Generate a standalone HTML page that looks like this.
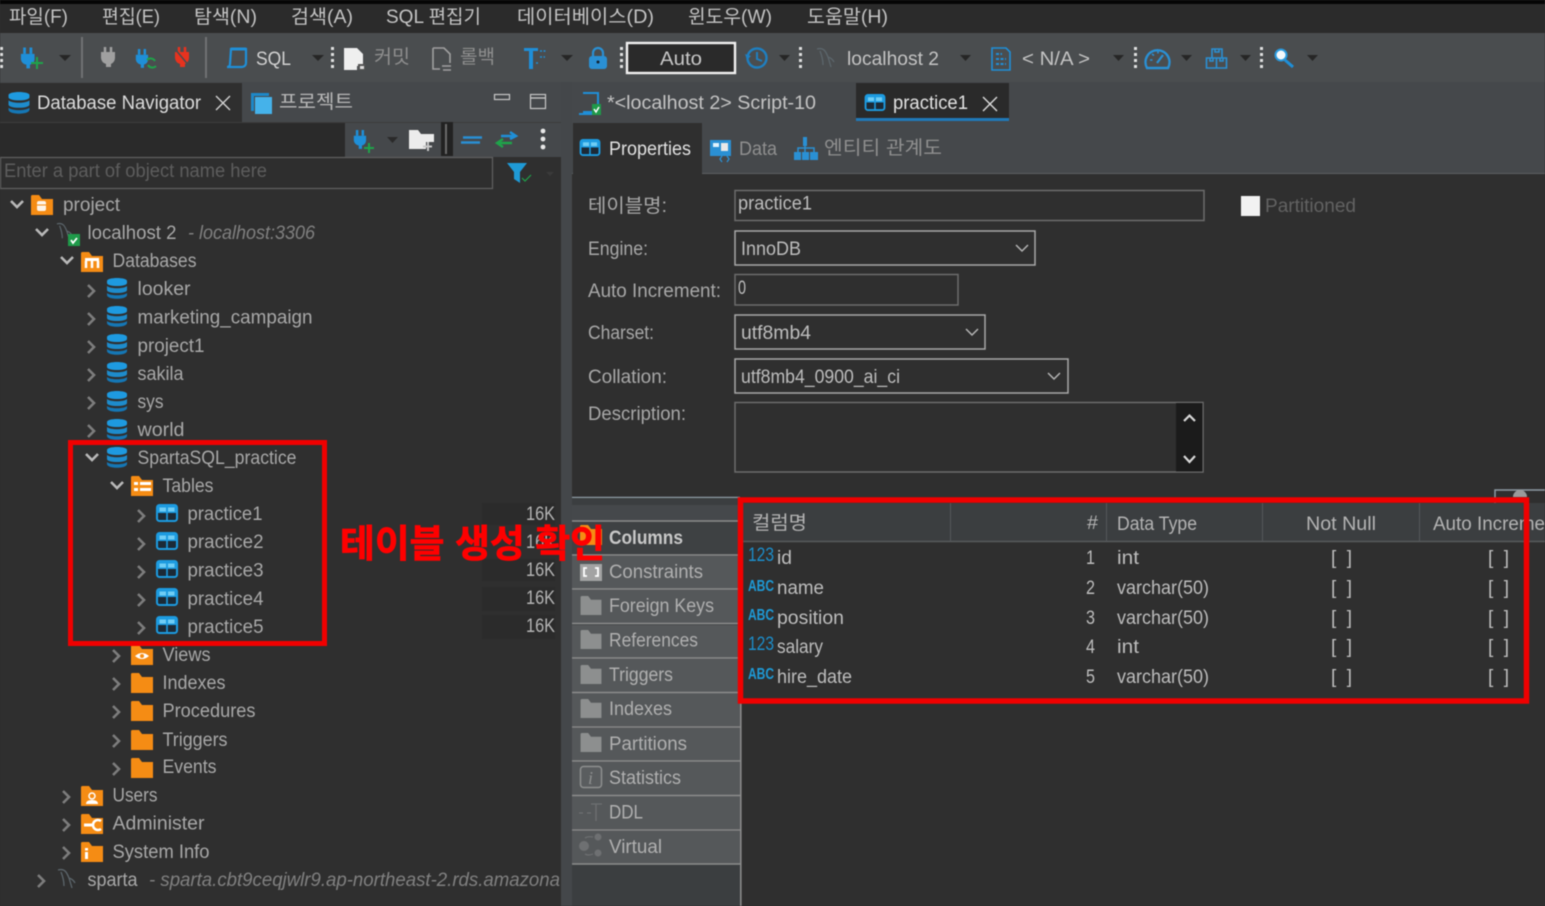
<!DOCTYPE html>
<html lang="ko"><head><meta charset="utf-8"><title>DBeaver</title>
<style>
html,body{margin:0;padding:0;background:#2f2f2f;width:1545px;height:906px;overflow:hidden}
svg{display:block;filter:blur(.4px)}
text{font-family:"Liberation Sans","Noto Sans CJK KR",sans-serif;font-size:19px;fill:#a9a9a9;white-space:pre}
.m text{fill:#c4c4c4}
.t text{fill:#d2d2d2}
.i{font-style:italic;fill:#808080}
.g text{fill:#a8a8a8}
.s text{fill:#b4b4b4}
.b text{fill:#bdbdbd}
.dd{fill:#262626}
.gr{fill:#e0e0e0}
</style></head><body>
<svg xmlns="http://www.w3.org/2000/svg" width="1545" height="906" viewBox="0 0 1545 906">
<defs>
<symbol id="plug" viewBox="0 0 22 24" overflow="visible"><path d="M5 1v7M12 1v7" stroke="#1f8fd8" stroke-width="3" fill="none"/><path d="M1 8h15v6a7 7 0 0 1-5 6v4H7v-4a7 7 0 0 1-6-6z" fill="#1f8fd8"/></symbol>
<symbol id="db" viewBox="0 0 20 21"><path d="M0 3c0-4 20-4 20 0v2c0 4-20 4-20 0z" fill="#1e9ae0"/><path d="M0 8c3 3 17 3 20 0v4c0 4-20 4-20 0z" fill="#1e8ccc"/><path d="M0 15c3 3 17 3 20 0v2c0 5-20 5-20 0z" fill="#1577b5"/></symbol>
<symbol id="tb" viewBox="0 0 22 18"><rect x="1" y="1" width="20" height="16" rx="2.500" fill="#1c2a36" stroke="#1d9be0" stroke-width="2"/><rect x="1" y="1" width="20" height="8" rx="2" fill="#1d9be0"/><rect x="3.500" y="3.500" width="6.500" height="4" fill="#6fcdf5"/><rect x="12" y="3.500" width="6.500" height="4" fill="#6fcdf5"/><path d="M11 9v8" stroke="#1d9be0" stroke-width="1.600"/></symbol>
<symbol id="fo" viewBox="0 0 22 20"><path d="M0 1.500Q0 0 1.500 0H8l3 4h11v16H0z" fill="#f58c14"/></symbol>
<symbol id="fg" viewBox="0 0 22 20"><path d="M0 1.500Q0 0 1.500 0H8l3 4h11v16H0z" fill="#8d8f8f"/></symbol>
<symbol id="cr" viewBox="0 0 12 16"><path d="M2 2l6 6-6 6" fill="none" stroke="#7d7d7d" stroke-width="2.600"/></symbol>
<symbol id="cd" viewBox="0 0 16 12"><path d="M2 2l6 6 6-6" fill="none" stroke="#b9b9b9" stroke-width="2.600"/></symbol>
<symbol id="conn" viewBox="0 0 20 22"><path d="M1 2c7-2 9 3 11 8l3 10M4 4c2 5 3 10 3 14M12 10c3 1 5 3 6 5" fill="none" stroke="#5c666c" stroke-width="1.300"/></symbol>
<symbol id="gp" viewBox="0 0 4 22"><rect y="0" width="3" height="3" class="gr"/><rect y="6" width="3" height="3" class="gr"/><rect y="12" width="3" height="3" class="gr"/><rect y="18" width="3" height="3" class="gr"/></symbol>
</defs>

<rect width="1545" height="906" fill="#2f2f2f"/>
<!-- menu -->
<rect width="1545" height="33" fill="#2b2b2b"/><rect width="1545" height="4" fill="#050505"/>
<g class="m">
<text x="9" y="23" textLength="59" lengthAdjust="spacingAndGlyphs">파일(F)</text>
<text x="102" y="23" textLength="58" lengthAdjust="spacingAndGlyphs">편집(E)</text>
<text x="194" y="23" textLength="63" lengthAdjust="spacingAndGlyphs">탐색(N)</text>
<text x="291" y="23" textLength="62" lengthAdjust="spacingAndGlyphs">검색(A)</text>
<text x="386" y="23" textLength="95" lengthAdjust="spacingAndGlyphs">SQL 편집기</text>
<text x="517" y="23" textLength="137" lengthAdjust="spacingAndGlyphs">데이터베이스(D)</text>
<text x="688" y="23" textLength="84" lengthAdjust="spacingAndGlyphs">윈도우(W)</text>
<text x="807" y="23" textLength="81" lengthAdjust="spacingAndGlyphs">도움말(H)</text>
</g>
<!-- toolbar -->
<rect y="33" width="1545" height="49" fill="#4a4d4f"/>
<rect x="81" y="37" width="2" height="41" fill="#6f7173"/><rect x="205" y="37" width="2" height="41" fill="#6f7173"/>
<use href="#gp" x="0" y="47" width="4" height="22"/>
<use href="#plug" x="20" y="46" width="20" height="23"/><path d="M37 57v12M31 63h12" stroke="#1fa34a" stroke-width="2"/>
<path class="dd" d="M59 55h12l-6 6z"/>
<g transform="translate(100,47)"><path d="M5 0v6M11 0v6" stroke="#a0a0a0" stroke-width="2.500"/><path d="M1 5h14v6a7 7 0 0 1-4 6v3H6v-3a7 7 0 0 1-5-6z" fill="#a0a0a0"/></g>
<use href="#plug" x="135" y="47" width="18" height="22"/><path d="M147 60a5 5 0 0 1 8 1M156 66a5 5 0 0 1-8-1" stroke="#1fa34a" stroke-width="2" fill="none"/>
<g transform="translate(174,47)"><path d="M5 0v6M11 0v6" stroke="#e8321e" stroke-width="2.500"/><path d="M1 5h14v6a7 7 0 0 1-4 6v3H6v-3a7 7 0 0 1-5-6z" fill="#e8321e"/><path d="M1 2l15 18" stroke="#4a4d4f" stroke-width="1.500"/></g>
<path d="M231 49h15v14a4 4 0 0 1-4 4h-15a3 3 0 0 0 3-3z" fill="none" stroke="#1f8fd8" stroke-width="2.200"/><path d="M231 49h15" stroke="#1f8fd8" stroke-width="3"/>
<text x="256" y="65" textLength="35" lengthAdjust="spacingAndGlyphs" style="fill:#d2d2d2">SQL</text>
<path class="dd" d="M312 55h12l-6 6z"/>
<use href="#gp" x="331" y="47" width="4" height="22"/>
<path d="M344 48h13l6 6v12h-6v4h-13z" fill="#efefef"/><rect x="358" y="64" width="7" height="6" fill="#555"/><rect x="360" y="66" width="4" height="3" fill="#ddd"/>
<text x="374" y="63" textLength="36" lengthAdjust="spacingAndGlyphs" style="fill:#8e8e8e">커밋</text>
<path d="M433 48h11l6 6v9M440 69h-7v-21" fill="none" stroke="#a0a0a0" stroke-width="1.600"/><path d="M442 66h9M451 70h-8" stroke="#a0a0a0" stroke-width="1.500"/>
<text x="460" y="63" textLength="35" lengthAdjust="spacingAndGlyphs" style="fill:#8e8e8e">롤백</text>
<path d="M524 48h14v3h-5v18h-4V51h-5z" fill="#1f8fd8"/><path d="M540 51h7M540 57h5M536 63h3" stroke="#1f8fd8" stroke-width="1.500" stroke-dasharray="2 1.500"/>
<path class="dd" d="M561 55h12l-6 6z"/>
<rect x="589" y="56" width="18" height="13" rx="3" fill="#2a90d4"/><path d="M593 56v-3a5 5 0 0 1 10 0v3" fill="none" stroke="#2a90d4" stroke-width="2.200"/><circle cx="598" cy="62" r="1.500" fill="#123"/>
<use href="#gp" x="620" y="47" width="4" height="22"/>
<rect x="627" y="43" width="108" height="30" fill="#2a2a2a" stroke="#f1f1f1" stroke-width="2.400"/>
<text x="660" y="65" textLength="42" lengthAdjust="spacingAndGlyphs" style="fill:#c8c8c8">Auto</text>
<circle cx="757" cy="58" r="9.500" fill="none" stroke="#1f7fc0" stroke-width="2.400"/><path d="M757 52v7l5 2" fill="none" stroke="#1f7fc0" stroke-width="2"/><path d="M745 54l2 6 4-4z" fill="#1f7fc0"/>
<path class="dd" d="M779 55h11l-5.500 6z"/>
<use href="#gp" x="799" y="47" width="4" height="22"/>
<use href="#conn" x="816" y="47" width="20" height="22"/>
<text x="847" y="65" textLength="92" lengthAdjust="spacingAndGlyphs" style="fill:#c4c4c4">localhost 2</text>
<path class="dd" d="M960 55h11l-5.500 6z"/>
<path d="M992 48h14l4 4v18h-18z" fill="none" stroke="#1f8fd8" stroke-width="1.600"/><path d="M996 54h6M996 59h10M996 64h10" stroke="#1f8fd8" stroke-width="2" stroke-dasharray="3 1.500"/>
<text x="1022" y="65" textLength="68" lengthAdjust="spacingAndGlyphs" style="fill:#c4c4c4">&lt; N/A &gt;</text>
<path class="dd" d="M1113 55h11l-5.500 6z"/>
<use href="#gp" x="1134" y="47" width="4" height="22"/>
<path d="M1147 68a12 12 0 1 1 21 0z" fill="none" stroke="#2a90d4" stroke-width="2.400"/><path d="M1157 63l6-8" stroke="#2a90d4" stroke-width="2.200"/><path d="M1150 60h2.500M1152 54l2 1.500M1158 51v2.500" stroke="#2a90d4" stroke-width="1.600"/>
<path class="dd" d="M1181 55h11l-5.500 6z"/>
<path d="M1212 49h10v9h-10zM1206.500 58h20v10h-20zM1216.500 58v10M1215 49v3h4v-3M1210 58v3h3v-3M1220 58v3h3v-3" fill="none" stroke="#2a90d4" stroke-width="1.600"/>
<path class="dd" d="M1240 55h11l-5.500 6z"/>
<use href="#gp" x="1260" y="47" width="4" height="22"/>
<circle cx="1281" cy="55" r="5.500" fill="#f3f8fb" stroke="#2a9ade" stroke-width="2"/><path d="M1285 60l8 7" stroke="#1f8fd8" stroke-width="3"/>
<path class="dd" d="M1307 55h11l-5.500 6z"/>

<!-- left panel tabs -->
<rect y="82" width="561" height="40" fill="#45484b"/>
<rect y="83" width="242" height="39" fill="#2f2f2f"/>
<use href="#db" x="8" y="92" width="22" height="22"/>
<text x="37" y="109" textLength="164" lengthAdjust="spacingAndGlyphs" style="fill:#dcdcdc">Database Navigator</text>
<path d="M216 96l14 14M230 96l-14 14" stroke="#d2d2d2" stroke-width="1.400"/>
<path d="M251 93h18v3h-15v15h-3z" fill="#1d88c8"/><rect x="255" y="97" width="17" height="17" fill="#45b2ea"/>
<text x="279" y="108" textLength="74" lengthAdjust="spacingAndGlyphs" style="fill:#b8b8b8">프로젝트</text>
<rect x="494.500" y="94.500" width="15" height="5" fill="none" stroke="#c8c8c8" stroke-width="1.200"/>
<rect x="530.500" y="94.500" width="15" height="14" fill="none" stroke="#c8c8c8" stroke-width="1.200"/><path d="M530 98h16" stroke="#c8c8c8" stroke-width="1.400"/>
<!-- nav toolbar -->
<rect y="122" width="345" height="35" fill="#2a2a2a"/><rect x="345" y="122" width="216" height="35" fill="#45484b"/>
<path d="M0 122.500h561" stroke="#3c3c3c"/>
<use href="#plug" x="353" y="128" width="18" height="22"/><path d="M369 144v10M364 149h10" stroke="#1fa34a" stroke-width="2" transform="translate(0,-1)"/>
<path d="M387 137h11l-5.500 6z" fill="#2a2a2a"/>
<path d="M409 130h9l3 4h13v8h-8v7h-17z" fill="#ececec"/><path d="M428 145v9M423 149.500h9" stroke="#c8c8c8" stroke-width="2" transform="translate(0,-3)"/>
<rect x="441" y="122" width="12" height="34" fill="#222"/><rect x="445" y="124" width="2" height="30" fill="#6a6a6a"/>
<path d="M463 137.500h19M461 142.500h19" stroke="#2a8fd4" stroke-width="2.600" fill="none"/>
<path d="M501 136h14M510 132l6 4-6 3" stroke="#1f8fd8" stroke-width="2.400" fill="none"/><path d="M512 143h-14M503 139l-6 4 6 4" stroke="#1fa34a" stroke-width="2.400" fill="none"/>
<circle cx="543" cy="131" r="2.400" fill="#e8e8e8"/><circle cx="543" cy="139" r="2.400" fill="#e8e8e8"/><circle cx="543" cy="147" r="2.400" fill="#e8e8e8"/>
<!-- filter -->
<rect x=".5" y="157.500" width="492" height="31" fill="#2e2e2e" stroke="#5e5e5e" stroke-width="1.300"/>
<text x="4" y="177" textLength="263" lengthAdjust="spacingAndGlyphs" style="fill:#5d5d5d">Enter a part of object name here</text>
<path d="M507 163h20l-7 9v11l-6-4v-7z" fill="#1f9ad6"/><path d="M522 178l3 3 6-6" stroke="#1fa34a" fill="none" stroke-width="1.200"/>
<path d="M546 172h8l-4 4z" fill="#3a3a3a"/>

<!-- sash -->
<rect x="561" y="82" width="11" height="824" fill="#44474a"/>

<!-- tree -->
<g class="g">
<text x="63" y="211" textLength="57" lengthAdjust="spacingAndGlyphs">project</text>
<text x="87.500" y="239" textLength="89" lengthAdjust="spacingAndGlyphs">localhost 2</text>
<text x="188" y="239" textLength="127" lengthAdjust="spacingAndGlyphs" class="i" style="fill:#808080">- localhost:3306</text>
<text x="112.500" y="267" textLength="84" lengthAdjust="spacingAndGlyphs">Databases</text>
<text x="137.500" y="295" textLength="53" lengthAdjust="spacingAndGlyphs">looker</text>
<text x="137.500" y="323.500" textLength="175" lengthAdjust="spacingAndGlyphs">marketing_campaign</text>
<text x="137.500" y="352" textLength="67" lengthAdjust="spacingAndGlyphs">project1</text>
<text x="137.500" y="380" textLength="46" lengthAdjust="spacingAndGlyphs">sakila</text>
<text x="137.500" y="408" textLength="26" lengthAdjust="spacingAndGlyphs">sys</text>
<text x="137.500" y="436" textLength="47" lengthAdjust="spacingAndGlyphs">world</text>
<text x="137.500" y="464" textLength="159" lengthAdjust="spacingAndGlyphs">SpartaSQL_practice</text>
<text x="162.500" y="492" textLength="51" lengthAdjust="spacingAndGlyphs">Tables</text>
<text x="187.500" y="520" textLength="75" lengthAdjust="spacingAndGlyphs">practice1</text>
<text x="187.500" y="548" textLength="76" lengthAdjust="spacingAndGlyphs">practice2</text>
<text x="187.500" y="576.500" textLength="76" lengthAdjust="spacingAndGlyphs">practice3</text>
<text x="187.500" y="605" textLength="76" lengthAdjust="spacingAndGlyphs">practice4</text>
<text x="187.500" y="633" textLength="76" lengthAdjust="spacingAndGlyphs">practice5</text>
<text x="162.500" y="661" textLength="48" lengthAdjust="spacingAndGlyphs">Views</text>
<text x="162.500" y="689" textLength="63" lengthAdjust="spacingAndGlyphs">Indexes</text>
<text x="162.500" y="717" textLength="93" lengthAdjust="spacingAndGlyphs">Procedures</text>
<text x="162.500" y="746" textLength="65" lengthAdjust="spacingAndGlyphs">Triggers</text>
<text x="162.500" y="773" textLength="54" lengthAdjust="spacingAndGlyphs">Events</text>
<text x="112.500" y="801.500" textLength="45" lengthAdjust="spacingAndGlyphs">Users</text>
<text x="112.500" y="829.500" textLength="92" lengthAdjust="spacingAndGlyphs">Administer</text>
<text x="112.500" y="858" textLength="97" lengthAdjust="spacingAndGlyphs">System Info</text>
<text x="87.500" y="886" textLength="50" lengthAdjust="spacingAndGlyphs">sparta</text>
<text x="149" y="886" textLength="411" lengthAdjust="spacingAndGlyphs" class="i" style="fill:#808080">- sparta.cbt9ceqjwlr9.ap-northeast-2.rds.amazona</text>
</g>
<!-- chevrons expanded -->
<use href="#cd" x="9" y="199" width="16" height="12"/>
<use href="#cd" x="34" y="227" width="16" height="12"/>
<use href="#cd" x="59" y="255" width="16" height="12"/>
<use href="#cd" x="84" y="452" width="16" height="12"/>
<use href="#cd" x="109" y="480" width="16" height="12"/>
<!-- chevrons collapsed -->
<use href="#cr" x="86" y="283" width="12" height="16"/>
<use href="#cr" x="86" y="311" width="12" height="16"/>
<use href="#cr" x="86" y="339" width="12" height="16"/>
<use href="#cr" x="86" y="367" width="12" height="16"/>
<use href="#cr" x="86" y="395" width="12" height="16"/>
<use href="#cr" x="86" y="423" width="12" height="16"/>
<use href="#cr" x="136" y="508" width="12" height="16"/>
<use href="#cr" x="136" y="536" width="12" height="16"/>
<use href="#cr" x="136" y="564" width="12" height="16"/>
<use href="#cr" x="136" y="592" width="12" height="16"/>
<use href="#cr" x="136" y="620" width="12" height="16"/>
<use href="#cr" x="111" y="648" width="12" height="16"/>
<use href="#cr" x="111" y="676" width="12" height="16"/>
<use href="#cr" x="111" y="704" width="12" height="16"/>
<use href="#cr" x="111" y="733" width="12" height="16"/>
<use href="#cr" x="111" y="761" width="12" height="16"/>
<use href="#cr" x="61" y="789" width="12" height="16"/>
<use href="#cr" x="61" y="817" width="12" height="16"/>
<use href="#cr" x="61" y="845" width="12" height="16"/>
<use href="#cr" x="36" y="873" width="12" height="16"/>
<!-- tree icons -->
<use href="#fo" x="31" y="195" width="22" height="20"/><rect x="37" y="201" width="9" height="10" rx="2" fill="#fff" opacity=".9"/><path d="M37 205h9" stroke="#f58c14"/>
<use href="#conn" x="56" y="222" width="18" height="20"/><rect x="68" y="234" width="12" height="12" fill="#1f9a4a"/><path d="M71 240l2 3 4-5" stroke="#fff" stroke-width="1.800" fill="none"/>
<use href="#fo" x="81" y="252" width="22" height="20"/><rect x="85" y="258" width="14" height="3" fill="#fff"/><path d="M86 261v7M92 261v7M98 261v7" stroke="#fff" stroke-width="2.500"/>
<use href="#db" x="107" y="278" width="20" height="21"/>
<use href="#db" x="107" y="306" width="20" height="21"/>
<use href="#db" x="107" y="334" width="20" height="21"/>
<use href="#db" x="107" y="362" width="20" height="21"/>
<use href="#db" x="107" y="391" width="20" height="21"/>
<use href="#db" x="107" y="419" width="20" height="21"/>
<use href="#db" x="107" y="447" width="20" height="21"/>
<use href="#fo" x="131" y="476" width="22" height="20"/><rect x="134" y="482" width="4" height="3" fill="#fff"/><rect x="140" y="482" width="11" height="3" fill="#fff"/><rect x="134" y="488" width="4" height="3" fill="#fff"/><rect x="140" y="488" width="11" height="3" fill="#fff"/>
<use href="#tb" x="156" y="504" width="22" height="18"/>
<use href="#tb" x="156" y="532" width="22" height="18"/>
<use href="#tb" x="156" y="560" width="22" height="18"/>
<use href="#tb" x="156" y="588" width="22" height="18"/>
<use href="#tb" x="156" y="616" width="22" height="18"/>
<use href="#fo" x="131" y="645" width="22" height="20"/><path d="M135 656q7-6 14 0q-7 6-14 0z" fill="#fff"/><circle cx="142" cy="656" r="2" fill="#f58c14"/>
<use href="#fo" x="131" y="673" width="22" height="20"/>
<use href="#fo" x="131" y="701" width="22" height="20"/>
<use href="#fo" x="131" y="730" width="22" height="20"/>
<use href="#fo" x="131" y="758" width="22" height="20"/>
<use href="#fo" x="81" y="786" width="22" height="20"/><circle cx="92" cy="796" r="3" fill="none" stroke="#fff" stroke-width="1.500"/><path d="M86 804q0-4 6-4t6 4z" fill="#fff"/>
<use href="#fo" x="81" y="814" width="22" height="20"/><path d="M84 825h10" stroke="#fff" stroke-width="3"/><path d="M101 821a5 5 0 1 0 0 8" stroke="#fff" stroke-width="2.500" fill="none"/>
<use href="#fo" x="81" y="842" width="22" height="20"/><rect x="85" y="848" width="3" height="2.500" fill="#fff"/><rect x="85" y="852" width="3" height="7" fill="#fff"/>
<use href="#conn" x="57" y="868" width="20" height="22"/>
<!-- size column -->
<rect x="482" y="503" width="73" height="22" fill="#2b2b2b"/><rect x="482" y="559" width="73" height="22" fill="#2b2b2b"/><rect x="482" y="587" width="73" height="24" fill="#2b2b2b"/><rect x="482" y="615" width="73" height="24" fill="#2b2b2b"/>
<g class="s">
<text x="526" y="520" textLength="29" lengthAdjust="spacingAndGlyphs">16K</text>
<text x="526" y="548" textLength="29" lengthAdjust="spacingAndGlyphs">16K</text>
<text x="526" y="576" textLength="29" lengthAdjust="spacingAndGlyphs">16K</text>
<text x="526" y="604" textLength="29" lengthAdjust="spacingAndGlyphs">16K</text>
<text x="526" y="632" textLength="29" lengthAdjust="spacingAndGlyphs">16K</text>
</g>

<!-- right tabs -->
<rect x="572" y="82" width="973" height="40" fill="#45484b"/>
<path d="M583 93h15v19h-15M579 114h14" fill="none" stroke="#1f8fd8" stroke-width="2"/><rect x="592" y="104" width="9" height="11" fill="#1f9a4a"/><path d="M594 109l2 3 3-5" stroke="#fff" fill="none" stroke-width="1.500"/>
<text x="607" y="109" textLength="209" lengthAdjust="spacingAndGlyphs" style="fill:#c4c4c4">*&lt;localhost 2&gt; Script-10</text>
<rect x="856" y="83" width="153" height="35" fill="#2a2a2a"/><rect x="856" y="118" width="153" height="3" fill="#1f79b8"/>
<use href="#tb" x="864" y="94" width="22" height="17"/>
<text x="893" y="109" textLength="75" lengthAdjust="spacingAndGlyphs" style="fill:#e2e2e2">practice1</text>
<path d="M983 97l14 14M997 97l-14 14" stroke="#dcdcdc" stroke-width="1.400"/>
<!-- subtabs -->
<rect x="572" y="122" width="973" height="51" fill="#45484b"/>
<path d="M572 173.500h973" stroke="#5c5f61"/>
<rect x="573" y="123" width="129" height="51" fill="#2f2f2f"/>
<use href="#tb" x="579" y="139" width="22" height="17"/>
<text x="609" y="155" textLength="82" lengthAdjust="spacingAndGlyphs" style="fill:#e2e2e2">Properties</text>
<rect x="710" y="140" width="21" height="16" fill="#2a90d4"/><rect x="713" y="143" width="6" height="4" fill="#e0f2fc"/><rect x="721" y="143" width="7" height="8" fill="#e8e8e8"/><path d="M722 156l-2 3 2 3M727 156l2 3-2 3" stroke="#2a90d4" fill="none" stroke-width="1.300"/>
<text x="739" y="155" textLength="38" lengthAdjust="spacingAndGlyphs" style="fill:#8f8f8f">Data</text>
<rect x="803" y="137" width="4" height="9" fill="#2a90d4"/><path d="M798 152v-4h16v4M805 146v6" fill="none" stroke="#2a90d4" stroke-width="1.500"/><rect x="794" y="152" width="7" height="8" fill="#2a90d4"/><rect x="802" y="152" width="7" height="8" fill="#2a90d4"/><rect x="810" y="152" width="8" height="8" fill="#2a90d4"/>
<text x="824" y="154" textLength="118" lengthAdjust="spacingAndGlyphs" style="fill:#8f8f8f">엔티티 관계도</text>
<!-- form -->
<g class="g">
<text x="588" y="212" textLength="79" lengthAdjust="spacingAndGlyphs">테이블명:</text>
<text x="588" y="255" textLength="60" lengthAdjust="spacingAndGlyphs">Engine:</text>
<text x="588" y="297" textLength="133" lengthAdjust="spacingAndGlyphs">Auto Increment:</text>
<text x="588" y="339" textLength="66" lengthAdjust="spacingAndGlyphs">Charset:</text>
<text x="588" y="383" textLength="79" lengthAdjust="spacingAndGlyphs">Collation:</text>
<text x="588" y="420" textLength="98" lengthAdjust="spacingAndGlyphs">Description:</text>
</g>
<g fill="none" stroke="#6c6c6c" stroke-width="1.500">
<rect x="735" y="190.500" width="469" height="30"/>
<rect x="735" y="274.500" width="223" height="30.500"/>
<rect x="735" y="402.500" width="468" height="69.500"/>
</g>
<g fill="none" stroke="#a8a8a8" stroke-width="1.500">
<rect x="735" y="231" width="300" height="34"/>
<rect x="735" y="315" width="250" height="34"/>
<rect x="735" y="359" width="333" height="34"/>
</g>
<rect x="1176" y="403" width="26.500" height="68.500" fill="#1b1b1b"/>
<path d="M1184 421l5.500-5.500 5.500 5.500M1184 456l5.500 6 5.500-6" fill="none" stroke="#d8d8d8" stroke-width="2.200"/>
<path d="M1016 245l6 6 6-6M966 329l6 6 6-6M1048 373l6 6 6-6" fill="none" stroke="#b4b4b4" stroke-width="1.500"/>
<g class="b">
<text x="738" y="209.500" textLength="74" lengthAdjust="spacingAndGlyphs">practice1</text>
<text x="741" y="255" textLength="60" lengthAdjust="spacingAndGlyphs">InnoDB</text>
<text x="738" y="294" textLength="8" lengthAdjust="spacingAndGlyphs">0</text>
<text x="741" y="339" textLength="70" lengthAdjust="spacingAndGlyphs">utf8mb4</text>
<text x="741" y="383" textLength="159" lengthAdjust="spacingAndGlyphs">utf8mb4_0900_ai_ci</text>
</g>
<rect x="1241" y="196" width="19" height="20" fill="#f2f2f2"/>
<text x="1265" y="212" textLength="91" lengthAdjust="spacingAndGlyphs" style="fill:#626262">Partitioned</text>

<!-- divider -->
<path d="M572 497.500h168" stroke="#8e9aa3" stroke-width="1.500"/>
<path d="M1495 503v-13h50" fill="none" stroke="#8e9aa3" stroke-width="1.500"/><path d="M1513 497a7 7 0 0 1 14 0" fill="#9a9a9a"/>
<!-- folders column -->
<rect x="572" y="498" width="169" height="408" fill="#3b3e40"/>
<rect x="572" y="505" width="169" height="16" fill="#45484b"/>
<g>
<rect x="572" y="522" width="169" height="33" fill="#3e4143"/>
<rect x="572" y="556" width="169" height="33" fill="#55585a"/>
<rect x="572" y="590" width="169" height="33" fill="#55585a"/>
<rect x="572" y="625" width="169" height="33" fill="#55585a"/>
<rect x="572" y="659" width="169" height="33" fill="#55585a"/>
<rect x="572" y="693" width="169" height="33" fill="#55585a"/>
<rect x="572" y="728" width="169" height="33" fill="#55585a"/>
<rect x="572" y="762" width="169" height="33" fill="#55585a"/>
<rect x="572" y="796" width="169" height="33" fill="#55585a"/>
<rect x="572" y="831" width="169" height="33" fill="#55585a"/>
</g>
<g stroke="#8c8c8c" stroke-width="1.400">
<path d="M572 521h169M572 555h169M572 589h169M572 623.500h169M572 658h169M572 692.500h169M572 727h169M572 761h169M572 795.500h169M572 830h169M572 864h169"/>
</g>
<rect x="740" y="498" width="1.600" height="408" fill="#8a8a8a"/>
<use href="#fo" x="580" y="525" width="22" height="20"/>
<rect x="580" y="564" width="22" height="17" fill="#a3a3a3"/><path d="M587 568h-3v8h3M595 568h3v8h-3" stroke="#fff" stroke-width="1.800" fill="none"/>
<use href="#fg" x="580" y="596" width="22" height="19"/>
<use href="#fg" x="580" y="630" width="22" height="19"/>
<use href="#fg" x="580" y="665" width="22" height="19"/>
<use href="#fg" x="580" y="699" width="22" height="19"/>
<use href="#fg" x="580" y="733" width="22" height="19"/>
<rect x="580.500" y="766.500" width="21" height="21" rx="3" fill="#5a5d5f" stroke="#8d8f8f" stroke-width="1.500"/><text x="588" y="784" style="font-family:'Liberation Serif',serif;font-style:italic;font-size:18px;fill:#8d8f8f">i</text>
<path d="M591 804h11M596 804v17M579 813h4M587 813h4" stroke="#6e7072" stroke-width="1.300"/>
<circle cx="584" cy="846" r="5" fill="#6e7072"/><circle cx="598" cy="837" r="3.500" fill="#6e7072"/><circle cx="598" cy="853" r="3.500" fill="#6e7072"/><path d="M585 838q3-2 8-1M585 854q3 2 8 0" fill="none" stroke="#6e7072" stroke-width="1.200"/>
<g class="g">
<text x="609" y="544" textLength="74" lengthAdjust="spacingAndGlyphs" style="font-weight:700;fill:#c8c8c8">Columns</text>
<text x="609" y="578" textLength="94" lengthAdjust="spacingAndGlyphs" style="fill:#b0b0b0">Constraints</text>
<text x="609" y="612" textLength="105" lengthAdjust="spacingAndGlyphs" style="fill:#b0b0b0">Foreign Keys</text>
<text x="609" y="646.500" textLength="89" lengthAdjust="spacingAndGlyphs" style="fill:#b0b0b0">References</text>
<text x="609" y="681" textLength="64" lengthAdjust="spacingAndGlyphs" style="fill:#b0b0b0">Triggers</text>
<text x="609" y="715" textLength="63" lengthAdjust="spacingAndGlyphs" style="fill:#b0b0b0">Indexes</text>
<text x="609" y="750" textLength="78" lengthAdjust="spacingAndGlyphs" style="fill:#b0b0b0">Partitions</text>
<text x="609" y="784" textLength="72" lengthAdjust="spacingAndGlyphs" style="fill:#b0b0b0">Statistics</text>
<text x="609" y="818.500" textLength="34" lengthAdjust="spacingAndGlyphs" style="fill:#b0b0b0">DDL</text>
<text x="609" y="853" textLength="53" lengthAdjust="spacingAndGlyphs" style="fill:#b0b0b0">Virtual</text>
</g>
<!-- table -->
<rect x="742" y="503" width="803" height="38" fill="#3b3e40"/>
<path d="M742 541.500h803" stroke="#575a5c" stroke-width="1.400"/>
<path d="M950.500 503v38M1106.500 503v38M1262.500 503v38M1419.500 503v38" stroke="#54575a"/>
<g class="g">
<text x="752" y="529" textLength="55" lengthAdjust="spacingAndGlyphs" style="fill:#b4b4b4">컬럼명</text>
<text x="1087" y="529" textLength="11" lengthAdjust="spacingAndGlyphs" style="fill:#b4b4b4">#</text>
<text x="1117" y="530" textLength="80" lengthAdjust="spacingAndGlyphs" style="fill:#b4b4b4">Data Type</text>
<text x="1306" y="530" textLength="70" lengthAdjust="spacingAndGlyphs" style="fill:#b4b4b4">Not Null</text>
<text x="1433" y="530" textLength="112" lengthAdjust="spacingAndGlyphs" style="fill:#b4b4b4">Auto Increme</text>
</g>
<g style="fill:#1e9ad6">
<text x="748" y="561" textLength="26" lengthAdjust="spacingAndGlyphs" style="fill:#1c8ecb">123</text>
<text x="748" y="591" textLength="26" lengthAdjust="spacingAndGlyphs" style="fill:#1e9ad6;font-weight:700;font-size:16px">ABC</text>
<text x="748" y="620" textLength="26" lengthAdjust="spacingAndGlyphs" style="fill:#1e9ad6;font-weight:700;font-size:16px">ABC</text>
<text x="748" y="650" textLength="26" lengthAdjust="spacingAndGlyphs" style="fill:#1c8ecb">123</text>
<text x="748" y="679" textLength="26" lengthAdjust="spacingAndGlyphs" style="fill:#1e9ad6;font-weight:700;font-size:16px">ABC</text>
</g>
<g class="b">
<text x="777" y="564" textLength="15" lengthAdjust="spacingAndGlyphs">id</text>
<text x="777" y="594" textLength="47" lengthAdjust="spacingAndGlyphs">name</text>
<text x="777" y="624" textLength="67" lengthAdjust="spacingAndGlyphs">position</text>
<text x="777" y="653" textLength="46" lengthAdjust="spacingAndGlyphs">salary</text>
<text x="777" y="683" textLength="75" lengthAdjust="spacingAndGlyphs">hire_date</text>
<text x="1086" y="564" textLength="9" lengthAdjust="spacingAndGlyphs">1</text>
<text x="1086" y="594" textLength="9" lengthAdjust="spacingAndGlyphs">2</text>
<text x="1086" y="624" textLength="9" lengthAdjust="spacingAndGlyphs">3</text>
<text x="1086" y="653" textLength="9" lengthAdjust="spacingAndGlyphs">4</text>
<text x="1086" y="683" textLength="9" lengthAdjust="spacingAndGlyphs">5</text>
<text x="1117" y="564" textLength="22" lengthAdjust="spacingAndGlyphs">int</text>
<text x="1117" y="594" textLength="92" lengthAdjust="spacingAndGlyphs">varchar(50)</text>
<text x="1117" y="624" textLength="92" lengthAdjust="spacingAndGlyphs">varchar(50)</text>
<text x="1117" y="653" textLength="22" lengthAdjust="spacingAndGlyphs">int</text>
<text x="1117" y="683" textLength="92" lengthAdjust="spacingAndGlyphs">varchar(50)</text>
<text x="1331" y="564" textLength="21" lengthAdjust="spacing">[ ]</text>
<text x="1331" y="594" textLength="21" lengthAdjust="spacing">[ ]</text>
<text x="1331" y="624" textLength="21" lengthAdjust="spacing">[ ]</text>
<text x="1331" y="653" textLength="21" lengthAdjust="spacing">[ ]</text>
<text x="1331" y="683" textLength="21" lengthAdjust="spacing">[ ]</text>
<text x="1488" y="564" textLength="21" lengthAdjust="spacing">[ ]</text>
<text x="1488" y="594" textLength="21" lengthAdjust="spacing">[ ]</text>
<text x="1488" y="624" textLength="21" lengthAdjust="spacing">[ ]</text>
<text x="1488" y="653" textLength="21" lengthAdjust="spacing">[ ]</text>
<text x="1488" y="683" textLength="21" lengthAdjust="spacing">[ ]</text>
</g>
<!-- annotations -->
<rect x="70.500" y="442.500" width="254" height="201" fill="none" stroke="#f00000" stroke-width="5"/>
<rect x="740.500" y="500" width="786" height="201" fill="none" stroke="#f00000" stroke-width="5.500"/>
<text x="340" y="557" textLength="265" lengthAdjust="spacingAndGlyphs" style="font-size:38px;font-weight:700;fill:#ff0000;stroke:#ff0000;stroke-width:.8px;font-family:'Noto Sans CJK KR','Liberation Sans',sans-serif">테이블 생성 확인</text>
</svg>
</body></html>
